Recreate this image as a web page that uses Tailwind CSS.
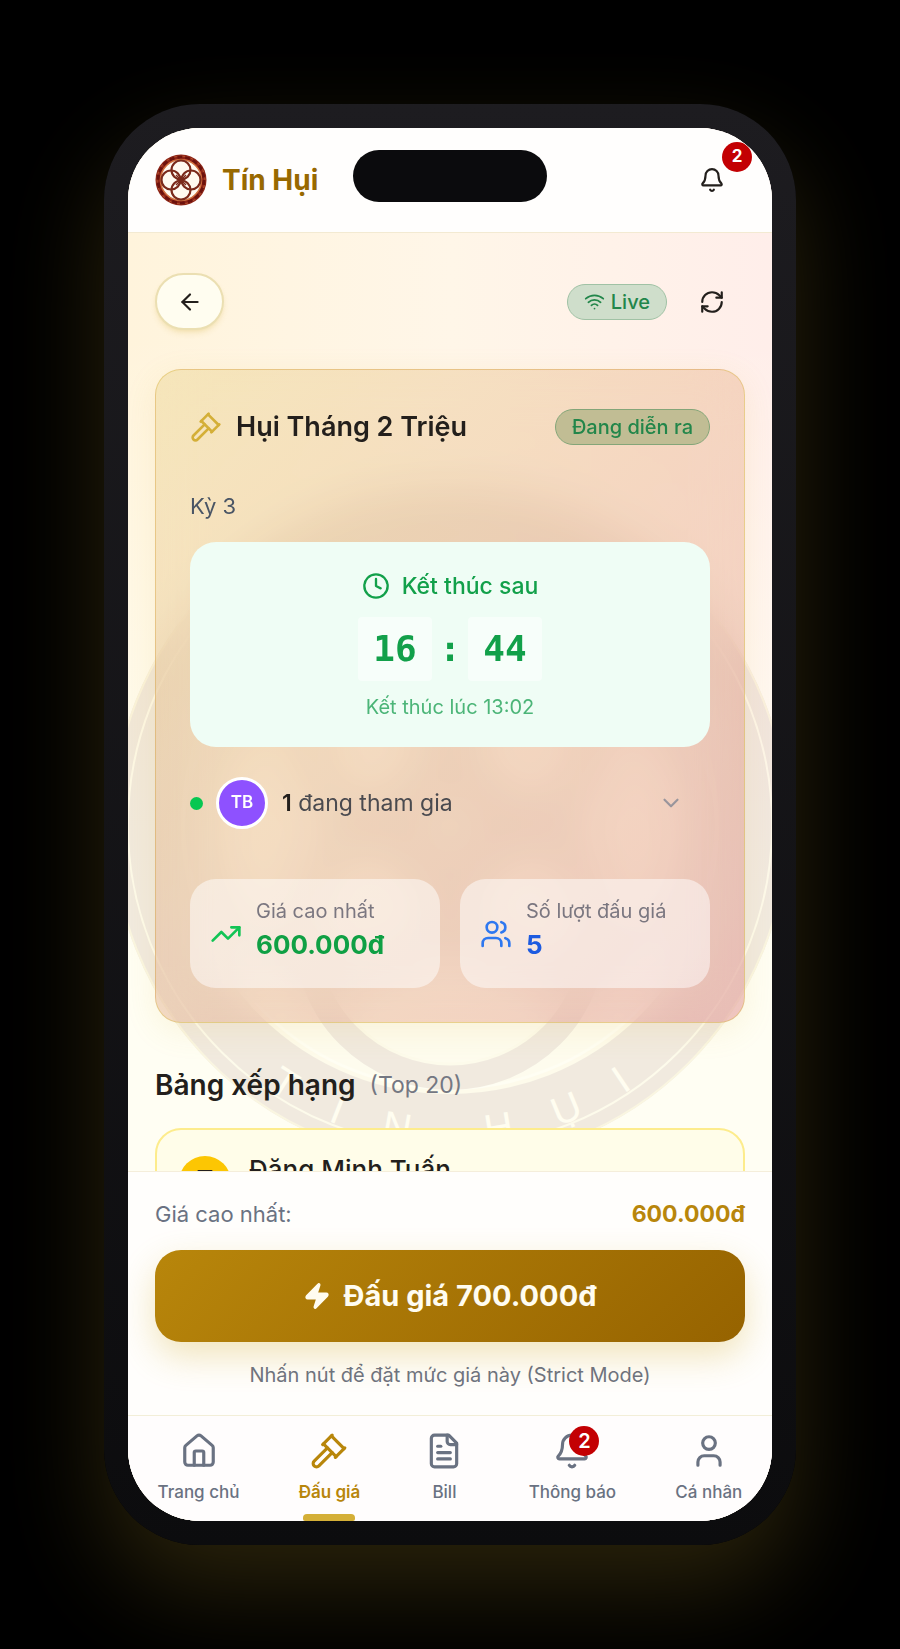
<!DOCTYPE html>
<html lang="vi">
<head>
    <meta charset="UTF-8">
    <meta name="viewport" content="width=device-width, initial-scale=1.0">
    <title>Tín Hụi - Đấu giá</title>
    <script src="https://cdn.jsdelivr.net/npm/@tailwindcss/browser@4"></script>
</head>
<body class="bg-black h-screen p-26 font-['Inter',sans-serif] text-[#231f1c]">

    <!-- Shared icons -->
    <svg class="hidden" aria-hidden="true">
        <symbol id="icon-bell" viewBox="0 0 24 24">
            <path d="M10.268 21a2 2 0 0 0 3.464 0" />
            <path d="M3.262 15.326A1 1 0 0 0 4 17h16a1 1 0 0 0 .74-1.673C19.41 13.956 18 12.499 18 8A6 6 0 0 0 6 8c0 4.499-1.411 5.956-2.738 7.326" />
        </symbol>
        <symbol id="icon-gavel" viewBox="0 0 24 24">
            <path d="m14 13-8.381 8.380a1 1 0 0 1-3.001-3l8.384-8.381" />
            <path d="m16 16 6-6" />
            <path d="m21.500 10.500-8-8" />
            <path d="m8 8 6-6" />
            <path d="m8.500 7.500 8 8" />
        </symbol>
    </svg>

    <!-- Phone -->
    <div class="mx-auto h-full w-full max-w-3xl rounded-[96px] bg-linear-to-b from-[#1d1c20] to-[#0c0c0e] p-6 shadow-[0_44px_100px_0_rgba(212,175,55,0.2)]">
        <div class="relative flex h-full flex-col overflow-hidden rounded-[72px] bg-[#fffef3]">

            <!-- Page background -->
            <div class="absolute inset-0 bg-linear-to-r from-[#fff4dc] via-[#fff6e8] to-[#ffeeea]"></div>
            <div class="absolute inset-0 bg-linear-to-b from-transparent from-15% to-[#fffef3] to-60%"></div>
            <svg class="absolute top-1/2 left-1/2 w-[105%] -translate-x-1/2 -translate-y-1/2 opacity-9" viewBox="-338 -338 676 676" fill="none" aria-hidden="true">
                <circle r="303" stroke="#6b3328" stroke-width="70" />
                <circle r="337" stroke="#d4af37" stroke-width="2" />
                <circle r="322" stroke="#f3dfa0" stroke-width="2" />
                <circle r="267" stroke="#f5e0a0" stroke-width="4" />
                <circle r="262" fill="#f6e39c" fill-opacity="0.5" />
                <g stroke="#6b3328" stroke-width="26">
                    <circle cy="-109" r="143" />
                    <circle cy="109" r="143" />
                    <circle cx="-109" r="143" />
                    <circle cx="109" r="143" />
                </g>
                <g stroke="#f3dfa0" stroke-width="3">
                    <circle cy="-109" r="130" />
                    <circle cy="109" r="130" />
                    <circle cx="-109" r="130" />
                    <circle cx="109" r="130" />
                </g>
                <path id="seal-arc" d="M-320 0A320 320 0 0 0 320 0" />
                <text class="font-['Liberation_Sans',sans-serif] text-[40px]" fill="#fff6d8" text-anchor="middle">
                    <textPath href="#seal-arc" startOffset="50%">T&nbsp;&nbsp;&nbsp; Í&nbsp;&nbsp;&nbsp; N&nbsp;&nbsp;&nbsp;&nbsp;&nbsp;&nbsp; H&nbsp;&nbsp;&nbsp; Ụ&nbsp;&nbsp;&nbsp; I</textPath>
                </text>
            </svg>

            <!-- Header -->
            <header class="relative flex h-[105px] shrink-0 items-center justify-between border-b border-[#f3ead2] bg-[#fffefd] px-[27px]">
                <div class="flex items-center gap-[15px]">
                    <svg class="size-[52px]" viewBox="-26 -26 52 52" fill="none" aria-hidden="true">
                        <circle r="25.500" fill="#8f2417" />
                        <circle r="24" stroke="#b5532f" stroke-width="1" />
                        <circle r="23" stroke="#6d120d" stroke-width="3" stroke-dasharray="5 3" />
                        <circle r="20.500" fill="#fffaf0" stroke="#d0713f" stroke-width="1.500" />
                        <g stroke="#7a2a1b" stroke-width="2.200">
                            <circle cy="-10" r="9.500" />
                            <circle cy="10" r="9.500" />
                            <circle cx="-10" r="9.500" />
                            <circle cx="10" r="9.500" />
                            <path d="M-5-5 5 5M5-5-5 5" stroke-width="1.400" />
                        </g>
                    </svg>
                    <h1 class="text-[28px] font-bold text-[#986900]">Tín Hụi</h1>
                </div>
                <div class="absolute top-[22px] left-1/2 h-[52px] w-[194px] -translate-x-1/2 rounded-full bg-[#0b0b0d]"></div>
                <button type="button" aria-label="Thông báo" class="relative flex h-14 w-[66px] items-center justify-center">
                    <svg class="size-[26px]" fill="none" stroke="currentColor" stroke-width="2" stroke-linecap="round" stroke-linejoin="round"><use href="#icon-bell" /></svg>
                    <span class="absolute -top-2.5 right-[-7px] flex size-[30px] items-center justify-center rounded-full bg-[#c30003] text-[17px] font-bold text-white">2</span>
                </button>
            </header>

            <!-- Scrolling content -->
            <main class="relative min-h-0 flex-1 overflow-hidden px-[27px] pt-10">
                <div class="flex items-center justify-between">
                    <button type="button" aria-label="Quay lại" class="flex h-[57px] w-[69px] items-center justify-center rounded-full border-2 border-[#ebdfb2] bg-[#fffdf0] shadow-md shadow-[#d4af37]/20">
                        <svg class="size-[26px]" viewBox="0 0 24 24" fill="none" stroke="currentColor" stroke-width="2" stroke-linecap="round" stroke-linejoin="round"><path d="m12 19-7-7 7-7" /><path d="M19 12H5" /></svg>
                    </button>
                    <div class="flex items-center gap-3">
                        <span class="flex h-9 items-center gap-1.5 rounded-full border border-[#a0c2a5] bg-[#cfdecb] px-4 text-[20px] font-medium text-[#22864a]">
                            <svg class="size-[21px]" viewBox="0 0 24 24" fill="none" stroke="currentColor" stroke-width="2" stroke-linecap="round" stroke-linejoin="round"><path d="M12 20h.01" /><path d="M2 8.820a15 15 0 0 1 20 0" /><path d="M5 12.859a10 10 0 0 1 14 0" /><path d="M8.500 16.429a5 5 0 0 1 7 0" /></svg>
                            Live
                        </span>
                        <button type="button" aria-label="Làm mới" class="flex h-14 w-[66px] items-center justify-center">
                            <svg class="size-[26px]" viewBox="0 0 24 24" fill="none" stroke="currentColor" stroke-width="2" stroke-linecap="round" stroke-linejoin="round"><path d="M3 12a9 9 0 0 1 9-9 9.750 9.750 0 0 1 6.740 2.740L21 8" /><path d="M21 3v5h-5" /><path d="M21 12a9 9 0 0 1-9 9 9.750 9.750 0 0 1-6.740-2.740L3 16" /><path d="M8 16H3v5" /></svg>
                        </button>
                    </div>
                </div>

                <!-- Auction card -->
                <section class="mt-[39px] rounded-[26px] border border-[#d4af37]/40 bg-linear-[135deg] from-[#d4af37]/22 to-[#c41020]/22 px-[34px] pt-[39px] pb-[34px] shadow-[0_8px_32px_rgba(212,175,55,0.12)] backdrop-blur-xl">
                    <div class="flex items-center justify-between">
                        <h2 class="flex items-center gap-3.5 text-[27px] leading-9 font-semibold">
                            <svg class="size-8 text-[#d4af37]" fill="none" stroke="currentColor" stroke-width="2" stroke-linecap="round" stroke-linejoin="round"><use href="#icon-gavel" /></svg>
                            Hụi Tháng 2 Triệu
                        </h2>
                        <span class="flex h-9 items-center rounded-full border border-[#84a578] bg-[#c1bd94] px-4 text-[20px] font-medium text-[#22864a]">Đang diễn ra</span>
                    </div>
                    <p class="mt-[45px] text-[22px] leading-8 text-[#4a5565]">Kỳ 3</p>

                    <div class="mt-5 flex flex-col items-center rounded-[26px] bg-[#effdf5] pt-[27px] pb-6 text-[#12a04a]">
                        <p class="flex items-center gap-3 text-[23px] leading-[34px] font-medium">
                            <svg class="size-7" viewBox="0 0 24 24" fill="none" stroke="currentColor" stroke-width="2" stroke-linecap="round" stroke-linejoin="round"><circle cx="12" cy="12" r="10" /><path d="M12 6v6l4 2" /></svg>
                            Kết thúc sau
                        </p>
                        <div class="mt-3.5 flex h-16 items-stretch font-['DejaVu_Sans_Mono',monospace] text-[36px] font-bold">
                            <span class="flex w-[74px] items-center justify-center rounded-sm bg-white/50">16</span>
                            <span class="flex w-9 items-center justify-center">:</span>
                            <span class="flex w-[74px] items-center justify-center rounded-sm bg-white/50">44</span>
                        </div>
                        <p class="mt-2.5 text-[20px] leading-8 text-[#4cb578]">Kết thúc lúc 13:02</p>
                    </div>

                    <button type="button" class="mt-1.5 flex w-full items-center py-6 pr-[26px] text-left text-[23px]">
                        <span class="size-[13px] rounded-full bg-[#07c751]"></span>
                        <span class="ml-[13px] flex size-[52px] items-center justify-center rounded-full border-3 border-white bg-[#8e51ff] text-[17px] font-semibold text-white">TB</span>
                        <span class="ml-3.5 flex-1 text-[#4a4a4f]"><b class="font-semibold text-[#231f1c]">1</b> đang tham gia</span>
                        <svg class="size-[26px] text-[#99959c]" viewBox="0 0 24 24" fill="none" stroke="currentColor" stroke-width="2" stroke-linecap="round" stroke-linejoin="round"><path d="m6 9 6 6 6-6" /></svg>
                    </button>

                    <div class="mt-[26px] grid grid-cols-2 gap-5">
                        <div class="flex items-center gap-3.5 rounded-[26px] bg-white/50 px-5 py-[18px]">
                            <svg class="size-8 shrink-0 text-[#12c455]" viewBox="0 0 24 24" fill="none" stroke="currentColor" stroke-width="2" stroke-linecap="round" stroke-linejoin="round"><path d="M16 7h6v6" /><path d="m22 7-8.500 8.500-5-5L2 17" /></svg>
                            <div class="pb-[5px]">
                                <p class="text-[20px] leading-7 text-[#7b7780]">Giá cao nhất</p>
                                <p class="text-[26px] leading-10 font-bold text-[#0fa044]">600.000đ</p>
                            </div>
                        </div>
                        <div class="flex items-center gap-3.5 rounded-[26px] bg-white/50 px-5 py-[18px]">
                            <svg class="size-8 shrink-0 text-[#2e78f0]" viewBox="0 0 24 24" fill="none" stroke="currentColor" stroke-width="2" stroke-linecap="round" stroke-linejoin="round"><path d="M16 21v-2a4 4 0 0 0-4-4H6a4 4 0 0 0-4 4v2" /><path d="M16 3.128a4 4 0 0 1 0 7.744" /><path d="M22 21v-2a4 4 0 0 0-3-3.870" /><circle cx="9" cy="7" r="4" /></svg>
                            <div class="pb-[5px]">
                                <p class="text-[20px] leading-7 text-[#7b7780]">Số lượt đấu giá</p>
                                <p class="text-[26px] leading-10 font-bold text-[#1d5be0]">5</p>
                            </div>
                        </div>
                    </div>
                </section>

                <!-- Leaderboard -->
                <h2 class="mt-11 flex items-center gap-3.5 text-[28px] leading-9 font-semibold">
                    Bảng xếp hạng
                    <span class="text-[23px] font-normal text-[#747782]">(Top 20)</span>
                </h2>
                <div class="mt-[25px] flex h-[110px] items-start rounded-[26px] border-2 border-[#fdec8c] bg-[#fffde9] px-[22px] pt-[26px]">
                    <span class="flex size-[52px] items-center justify-center rounded-full bg-[#fcc603]">
                        <svg class="size-[26px]" viewBox="0 0 24 24" fill="none" stroke="currentColor" stroke-width="2" stroke-linecap="round" stroke-linejoin="round"><path d="M6 9H4.500a2.500 2.500 0 0 1 0-5H6" /><path d="M18 9h1.500a2.500 2.500 0 0 0 0-5H18" /><path d="M4 22h16" /><path d="M10 14.660V17c0 .550-.470.980-.970 1.210C7.850 18.750 7 20.240 7 22" /><path d="M14 14.660V17c0 .550.470.980.970 1.210C16.150 18.750 17 20.240 17 22" /><path d="M18 2H6v7a6 6 0 0 0 12 0V2Z" /></svg>
                    </span>
                    <p class="ml-[18px] text-[26px] leading-7 font-medium">Đăng Minh Tuấn</p>
                    <p class="ml-auto text-[24px] leading-[54px] font-bold text-[#b4860b]">600.000đ</p>
                </div>
            </main>

            <!-- Bid panel -->
            <section class="relative shrink-0 border-t border-[#f5eedb] bg-[#fffefc] px-[27px] pt-[25px] pb-[25px]">
                <div class="flex items-center justify-between text-[22px] leading-[34px]">
                    <span class="text-[#6a7282]">Giá cao nhất:</span>
                    <span class="text-[23px] font-bold text-[#b8860b]">600.000đ</span>
                </div>
                <button type="button" class="mt-[19px] flex h-[92px] w-full items-center justify-center gap-3 rounded-[26px] bg-linear-[135deg] from-[#b8860b] to-[#966300] text-[29px] font-bold text-[#fffcf0] shadow-[0_14px_34px_rgba(212,175,55,0.32)]">
                    <svg class="size-7" viewBox="0 0 24 24" fill="currentColor" stroke="currentColor" stroke-width="2" stroke-linecap="round" stroke-linejoin="round"><path d="M4 14a1 1 0 0 1-.780-1.630l9.900-10.200a.500.500 0 0 1 .860.460l-1.920 6.020A1 1 0 0 0 13 10h7a1 1 0 0 1 .780 1.630l-9.900 10.200a.500.500 0 0 1-.860-.460l1.920-6.020A1 1 0 0 0 11 14z" /></svg>
                    Đấu giá 700.000đ
                </button>
                <p class="mt-[18px] text-center text-[20px] leading-[30px] text-[#6f737d]">Nhấn nút để đặt mức giá này (Strict Mode)</p>
            </section>

            <!-- Bottom navigation -->
            <nav class="relative flex shrink-0 justify-around border-t border-[#f3efd8] bg-[#fffdfd] text-[17px] leading-6 font-medium text-[#6a7282]">
                <a href="#" class="flex min-w-[50px] flex-col items-center gap-2.5 pt-4 pb-[17px]">
                    <svg class="size-[38px]" viewBox="0 0 24 24" fill="none" stroke="currentColor" stroke-width="2" stroke-linecap="round" stroke-linejoin="round"><path d="M15 21v-8a1 1 0 0 0-1-1h-4a1 1 0 0 0-1 1v8" /><path d="M3 10a2 2 0 0 1 .709-1.528l7-5.999a2 2 0 0 1 2.582 0l7 5.999A2 2 0 0 1 21 10v9a2 2 0 0 1-2 2H5a2 2 0 0 1-2-2z" /></svg>
                    Trang chủ
                </a>
                <a href="#" aria-current="page" class="relative flex min-w-[50px] flex-col items-center gap-2.5 pt-4 pb-[17px] font-semibold text-[#b8860b]">
                    <svg class="size-[38px]" fill="none" stroke="currentColor" stroke-width="2" stroke-linecap="round" stroke-linejoin="round"><use href="#icon-gavel" /></svg>
                    Đấu giá
                    <span class="absolute bottom-0 left-1/2 h-[7px] w-[52px] -translate-x-1/2 rounded-t-[4px] rounded-b-xs bg-[#d4af37]"></span>
                </a>
                <a href="#" class="flex min-w-[50px] flex-col items-center gap-2.5 pt-4 pb-[17px]">
                    <svg class="size-[38px]" viewBox="0 0 24 24" fill="none" stroke="currentColor" stroke-width="2" stroke-linecap="round" stroke-linejoin="round"><path d="M15 2H6a2 2 0 0 0-2 2v16a2 2 0 0 0 2 2h12a2 2 0 0 0 2-2V7Z" /><path d="M14 2v4a2 2 0 0 0 2 2h4" /><path d="M10 9H8" /><path d="M16 13H8" /><path d="M16 17H8" /></svg>
                    Bill
                </a>
                <a href="#" class="flex min-w-[50px] flex-col items-center gap-2.5 pt-4 pb-[17px]">
                    <span class="relative">
                        <svg class="size-[38px]" fill="none" stroke="currentColor" stroke-width="2" stroke-linecap="round" stroke-linejoin="round"><use href="#icon-bell" /></svg>
                        <span class="absolute -top-1.5 -right-2 flex size-[30px] items-center justify-center rounded-full bg-[#c30003] text-[20px] font-semibold text-white">2</span>
                    </span>
                    Thông báo
                </a>
                <a href="#" class="flex min-w-[50px] flex-col items-center gap-2.5 pt-4 pb-[17px]">
                    <svg class="size-[38px]" viewBox="0 0 24 24" fill="none" stroke="currentColor" stroke-width="2" stroke-linecap="round" stroke-linejoin="round"><path d="M19 21v-2a4 4 0 0 0-4-4H9a4 4 0 0 0-4 4v2" /><circle cx="12" cy="7" r="4" /></svg>
                    Cá nhân
                </a>
            </nav>
        </div>
    </div>
</body>
</html>
